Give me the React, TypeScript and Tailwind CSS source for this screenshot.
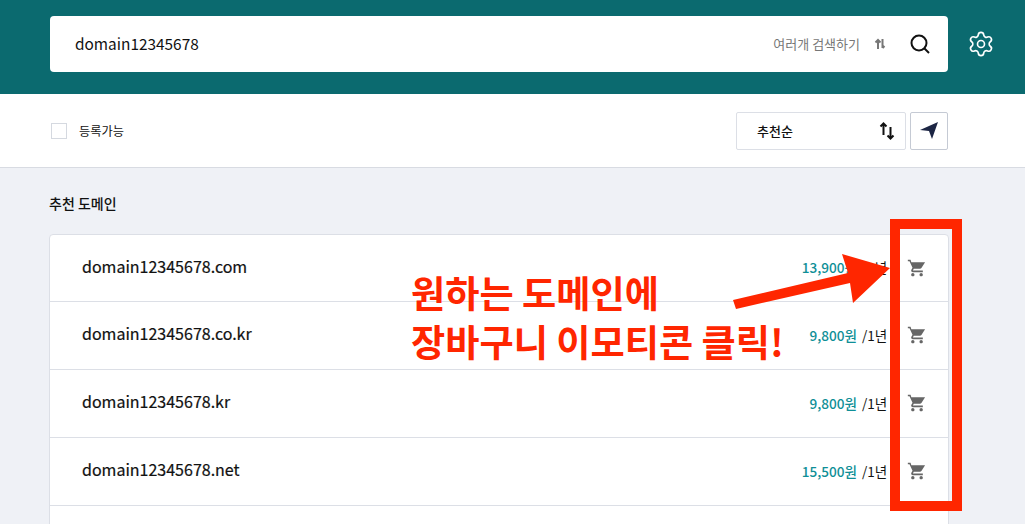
import { Settings } from "lucide-react"

const domains = [
  { name: "domain12345678.com", price: "13,900원" },
  { name: "domain12345678.co.kr", price: "9,800원" },
  { name: "domain12345678.kr", price: "9,800원" },
  { name: "domain12345678.net", price: "15,500원" },
]

const CartIcon = () => (
  <svg width="20" height="20" viewBox="0 0 24 24" fill="#666">
    <path d="M7 18c-1.1 0-1.99.9-1.99 2S5.9 22 7 22s2-.9 2-2-.9-2-2-2zM1 2v2h2l3.6 7.59-1.35 2.45c-.16.28-.25.61-.25.96 0 1.1.9 2 2 2h12v-2H7.42c-.14 0-.25-.11-.25-.25l.03-.12.9-1.63h7.45c.75 0 1.41-.41 1.75-1.03L21.7 5H5.21l-.94-3H1zm16 16c-1.1 0-1.99.9-1.99 2s.89 2 1.99 2 2-.9 2-2-.9-2-2-2z" />
  </svg>
)

const SortIcon = () => (
  <svg width="16" height="18" viewBox="0 0 16 18" fill="none" stroke="#111" strokeWidth="2">
    <path d="M4.5 13V1.5M1.5 4.5l3-3 3 3" />
    <path d="M11.5 5v11.5M8.5 13.5l3 3 3-3" />
  </svg>
)

const Row = ({ name, price }: { name: string; price: string }) => (
  <div className="flex h-[68px] items-center border-b border-[#dcdfe6] pr-[21px] pb-[1px] pl-[32px] first:h-[67px]">
    <span className="pb-[4px] text-[16px] text-[#111] [-webkit-text-stroke:0.2px_#111]">{name}</span>
    <span className="ml-auto text-[13.6px] font-medium text-[#0f8f97]">{price}</span>
    <span className="ml-[5px] w-[26px] text-[13.5px] text-[#111]">/1년</span>
    <span className="ml-[19px]">
      <CartIcon />
    </span>
  </div>
)

export default function App() {
  return (
    <div
      className="relative h-[524px] w-[1025px] overflow-hidden bg-[#eff1f6]"
      style={{ fontFamily: '"Noto Sans CJK KR", "Noto Sans", sans-serif' }}
    >
      <header className="flex h-[94px] items-start bg-[#0b6a6f] pt-[16px] pl-[50px]">
        <div className="flex h-[56px] w-[898px] items-center rounded-[4px] bg-white pr-[18px] pl-[25px]">
          <span className="text-[15.4px] text-[#111]">domain12345678</span>
          <span className="ml-auto text-[13px] text-[#777]">여러개 검색하기</span>
          <svg className="ml-[14px]" width="12" height="12" viewBox="0 0 12 12" fill="none" stroke="#777" strokeWidth="2">
            <path d="M4 11V2M1.5 4.5L4 2l2.5 2.5" />
            <path d="M8.5 1v9M8.5 10l2-2" />
          </svg>
          <svg className="ml-[24px]" width="20" height="20" viewBox="0 0 20 20" fill="none" stroke="#111" strokeWidth="2">
            <circle cx="9" cy="9" r="7.5" />
            <path d="M14.5 14.5L19 19" />
          </svg>
        </div>
        <Settings className="mt-[14px] ml-[19px] text-white" size={28} strokeWidth={1.4} />
      </header>

      <div className="flex h-[74px] items-center border-y border-y-white border-b-[#d8dbe2] bg-white pr-[77px] pl-[51px]">
        <span className="h-[16px] w-[16px] border border-[#d5d9e0] bg-white" />
        <span className="ml-[12px] text-[12.2px] text-[#111]">등록가능</span>
        <div className="ml-auto flex h-[38px] w-[170px] items-center justify-between rounded-[2px] border border-[#dcdfe6] pr-[10px] pl-[20px]">
          <span className="text-[13px] font-medium text-[#111]">추천순</span>
          <SortIcon />
        </div>
        <div className="ml-[4px] flex h-[38px] w-[38px] items-center justify-center rounded-[2px] border border-[#c5cad4]">
          <svg width="18" height="18" viewBox="0 0 18 18" fill="#1c2544">
            <path d="M18 0L0 8l9 1 3 8z" />
          </svg>
        </div>
      </div>

      <main className="px-[49px] pt-[25px]">
        <h2 className="text-[14px] leading-[20px] font-medium text-[#111]">추천 도메인</h2>
        <div className="mt-[21px] w-[900px] rounded-[4px] border border-[#dcdfe6] bg-white">
          {domains.map((d) => (
            <Row key={d.name} name={d.name} price={d.price} />
          ))}
          <div className="h-[68px]" />
        </div>
      </main>

      {/* annotation drawn over the page */}
      <div className="absolute top-[219px] left-[890px] h-[292px] w-[72px] border-[10px] border-[#ff2600]" />
      <svg className="absolute top-[250px] left-[730px]" width="165" height="64" viewBox="0 0 165 64" fill="#ff2600">
        <path d="M3 50L118 23L112 4L160 18L123 53L120 33L6 59z" />
      </svg>
      <div className="absolute top-[268px] left-[411px] text-[37.2px] leading-[49px] font-bold whitespace-nowrap text-[#ff2600]">
        <div>원하는 도메인에</div>
        <div>장바구니 이모티콘 클릭!</div>
      </div>
    </div>
  )
}
